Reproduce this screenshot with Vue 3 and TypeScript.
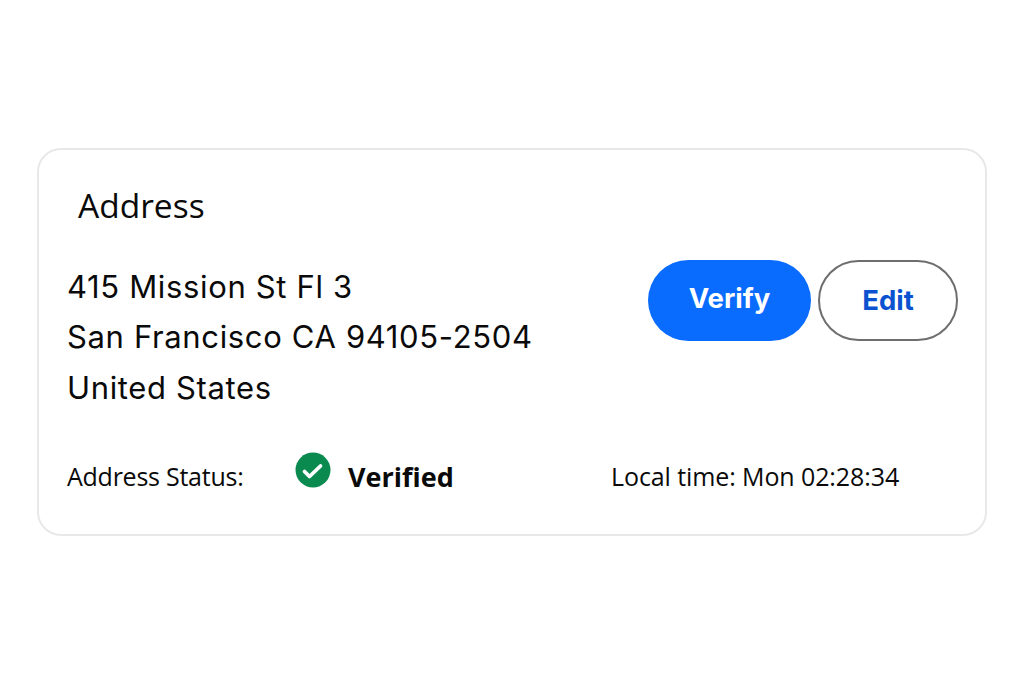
<script setup lang="ts">
const lines: string[] = ['415 Mission St Fl 3', 'San Francisco CA 94105-2504', 'United States']
</script>

<template>
  <main class="page">
    <section class="card">
      <h2 class="title">Address</h2>
      <div class="middle">
        <div class="lines">
          <p v-for="line in lines" :key="line" class="line">{{ line }}</p>
        </div>
        <div class="actions">
          <button class="btn primary" type="button"><span class="raise">Verify</span></button>
          <button class="btn outline" type="button">Edit</button>
        </div>
      </div>
      <div class="footer">
        <span class="label">Address Status:</span>
        <span class="status">
          <svg class="check" viewBox="0 0 36 36" width="36" height="36" aria-hidden="true">
            <circle cx="18" cy="18" r="17.5" fill="#0b8a50" />
            <path d="M9.5 19.5l5 5 11-10.5" fill="none" stroke="#fff" stroke-width="3.8" stroke-linecap="round" stroke-linejoin="round" />
          </svg>
          <strong class="verified">Verified</strong>
        </span>
        <span class="time">Local time: Mon 02:28:34</span>
      </div>
    </section>
  </main>
</template>

<style scoped>
.page {
  width: 1024px;
  height: 683px;
  box-sizing: border-box;
  padding: 148px 37px 147px;
  background: #fff;
  color: #0a0a0a;
  overflow: hidden;
}
.card {
  box-sizing: border-box;
  width: 950px;
  height: 388px;
  border: 2px solid #e8e8e8;
  border-radius: 24px;
  padding: 33px 27px 0 28px;
}
.title {
  margin: 0 0 0 11px;
  font: 400 33.5px/44px "Open Sans", sans-serif;
}
.middle {
  display: flex;
  justify-content: space-between;
  align-items: flex-start;
  margin-top: 35px;
}
.line {
  margin: 0;
  font: 400 31px/50.4px Inter, sans-serif;
  letter-spacing: 0.65px;
  white-space: nowrap;
}
.actions {
  display: flex;
  gap: 7px;
  margin-top: -2px;
}
.btn {
  height: 81px;
  border-radius: 41px;
  font: 700 27.5px/1 Inter, sans-serif;
  padding: 0;
  box-sizing: border-box;
}
.raise {
  display: block;
  margin-top: -3px;
}
.primary {
  width: 163px;
  background: #0a6cff;
  border: 0;
  color: #fff;
}
.outline {
  width: 140px;
  background: #fff;
  border: 2px solid #6e6e6e;
  color: #0a52d0;
}
.footer {
  display: flex;
  align-items: center;
  margin-top: 41px;
  height: 44px;
}
.label {
  width: 228px;
  font: 400 25px/1 "Open Sans", sans-serif;
  letter-spacing: -0.25px;
  white-space: nowrap;
}
.status {
  display: flex;
  align-items: center;
  gap: 17px;
  width: 316px;
}
.check {
  margin-top: -13px;
}
.verified {
  font: 700 27px/1 "Open Sans", sans-serif;
}
.time {
  font: 400 25px/1 "Open Sans", sans-serif;
  letter-spacing: -0.1px;
  white-space: nowrap;
}
</style>
